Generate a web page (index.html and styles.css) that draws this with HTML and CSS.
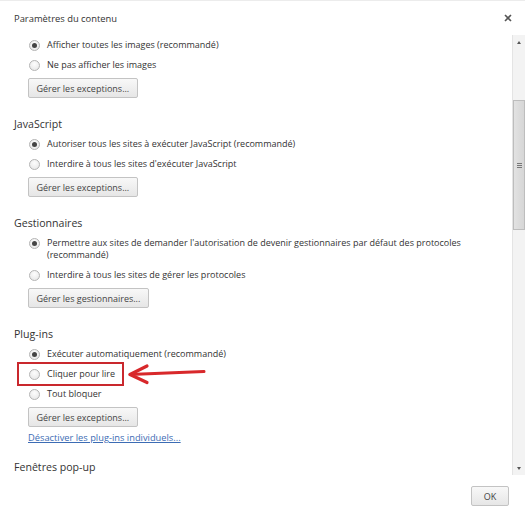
FILE: index.html
```html
<!DOCTYPE html>
<html>
<head>
    <meta charset="UTF-8">
    <title>Paramètres du contenu</title>
    <link rel="stylesheet" href="styles.css">
</head>
<body>
<div class="dialog">
    <div class="header">
        <span class="title">Paramètres du contenu</span>
        <svg class="close" width="8" height="8" viewBox="0 0 8 8">
            <path d="M1 1L7 7M7 1L1 7" stroke="#555" stroke-width="1.6"/>
        </svg>
    </div>
    <div class="main">
        <div class="content">
            <!-- images (titre hors de la zone visible) -->
            <div class="section">
                <div class="options">
                    <div class="option"><span class="radio checked"></span><span class="label">Afficher toutes les images (recommandé)</span></div>
                    <div class="option"><span class="radio"></span><span class="label">Ne pas afficher les images</span></div>
                    <button class="btn">Gérer les exceptions...</button>
                </div>
            </div>
            <div class="section">
                <div class="heading">JavaScript</div>
                <div class="options">
                    <div class="option"><span class="radio checked"></span><span class="label">Autoriser tous les sites à exécuter JavaScript (recommandé)</span></div>
                    <div class="option"><span class="radio"></span><span class="label">Interdire à tous les sites d'exécuter JavaScript</span></div>
                    <button class="btn">Gérer les exceptions...</button>
                </div>
            </div>
            <div class="section">
                <div class="heading">Gestionnaires</div>
                <div class="options">
                    <div class="option"><span class="radio checked"></span><span class="label">Permettre aux sites de demander l'autorisation de devenir gestionnaires par défaut des protocoles<br>(recommandé)</span></div>
                    <div class="option"><span class="radio"></span><span class="label">Interdire à tous les sites de gérer les protocoles</span></div>
                    <button class="btn">Gérer les gestionnaires...</button>
                </div>
            </div>
            <div class="section plugins">
                <div class="heading">Plug-ins</div>
                <div class="options">
                    <div class="option"><span class="radio checked"></span><span class="label">Exécuter automatiquement (recommandé)</span></div>
                    <div class="option highlight">
                        <span class="radio"></span><span class="label">Cliquer pour lire</span>
                        <svg class="arrow" width="82" height="22" viewBox="0 0 82 22">
                            <path d="M4 11.5L78 8.5" stroke="#d8282b" stroke-width="3" stroke-linecap="round" fill="none"/>
                            <path d="M21 3L4 11.5L21 19.5" stroke="#d8282b" stroke-width="3.2" stroke-linecap="round" stroke-linejoin="round" fill="none"/>
                        </svg>
                    </div>
                    <div class="option"><span class="radio"></span><span class="label">Tout bloquer</span></div>
                    <button class="btn">Gérer les exceptions...</button>
                    <a class="link" href="#">Désactiver les plug-ins individuels...</a>
                </div>
            </div>
            <div class="section">
                <div class="heading">Fenêtres pop-up</div>
            </div>
        </div>
        <div class="scrollbar">
            <div class="sb-btn"><span class="tri up"></span></div>
            <div class="thumb"><span class="grip"></span></div>
            <div class="sb-space"></div>
            <div class="sb-btn"><span class="tri down"></span></div>
        </div>
    </div>
    <div class="footer">
        <button class="btn ok">OK</button>
    </div>
</div>
</body>
</html>
```

FILE: styles.css
```css
* {
    margin: 0;
    padding: 0;
    box-sizing: border-box;
}
body {
    width: 525px;
    height: 517px;
    overflow: hidden;
    background: #fff;
    font-family: "Open Sans", "Noto Sans", sans-serif;
    color: #333;
}
.dialog {
    display: flex;
    flex-direction: column;
    height: 517px;
    border-top: 1px solid #ececec;
}
.header {
    height: 34px;
    display: flex;
    align-items: center;
    justify-content: space-between;
    padding: 0 13px 0 14px;
}
.title {
    font-size: 9.4px;
    color: #333;
}
.main {
    display: flex;
    height: 440px;
}
.content {
    flex: 1;
    padding-left: 14px;
    overflow: hidden;
}
.section {
    margin-bottom: 16px;
}
.section.plugins {
    margin-bottom: 12px;
}
.heading {
    font-size: 10.6px;
    line-height: 20px;
    color: #333;
}
.options {
    padding-left: 14px;
    display: flex;
    flex-direction: column;
    align-items: flex-start;
}
.option {
    display: flex;
    align-items: flex-start;
    padding: 4px 0;
    font-size: 9px;
    line-height: 12px;
}
.label {
    color: #333;
}
.radio {
    width: 11px;
    height: 11px;
    margin: 0.5px 7px 0 1px;
    border-radius: 50%;
    border: 1px solid #b4b4b4;
    background: radial-gradient(circle at 50% 35%, #fdfdfd, #e4e4e4);
    flex: none;
    display: flex;
    align-items: center;
    justify-content: center;
}
.radio.checked::after {
    content: "";
    width: 5px;
    height: 5px;
    border-radius: 50%;
    background: #444;
}
.highlight {
    position: relative;
    margin-left: -9px;
    padding-left: 9px;
    padding-right: 7px;
    outline: 2px solid #c9282d;
}
.arrow {
    position: absolute;
    left: calc(100% + 4px);
    top: -1px;
}
.btn {
    margin-top: 3px;
    height: 20px;
    padding: 0 7.5px;
    font-family: inherit;
    font-size: 9px;
    color: #444;
    border: 1px solid #c3c3c3;
    border-radius: 2px;
    background: linear-gradient(#f8f8f8, #e6e6e6);
}
.link {
    margin-top: 4px;
    font-size: 9.3px;
    line-height: 14px;
    color: #3c6cb4;
}
.scrollbar {
    width: 13px;
    display: flex;
    flex-direction: column;
    background: #f3f3f3;
    border-left: 1px solid #e4e4e4;
}
.sb-btn {
    height: 14px;
    display: flex;
    align-items: center;
    justify-content: center;
}
.tri {
    width: 0;
    height: 0;
    border-left: 2.5px solid transparent;
    border-right: 2.5px solid transparent;
}
.tri.up {
    border-bottom: 3px solid #555;
}
.tri.down {
    border-top: 3px solid #555;
}
.thumb {
    margin-top: 51px;
    height: 130px;
    background: linear-gradient(90deg, #e2e2e2, #d6d6d6);
    border: 1px solid #bdbdbd;
    display: flex;
    align-items: center;
    justify-content: center;
}
.grip {
    width: 5px;
    height: 5px;
    border-top: 1px solid #777;
    border-bottom: 1px solid #777;
    position: relative;
}
.grip::after {
    content: "";
    position: absolute;
    left: 0;
    right: 0;
    top: 1px;
    border-top: 1px solid #777;
}
.sb-space {
    flex: 1;
}
.footer {
    flex: 1;
    display: flex;
    justify-content: flex-end;
    align-items: flex-start;
    padding: 11px 16px 0 0;
}
.btn.ok {
    margin-top: 0;
    width: 38px;
    padding: 0;
}
```
